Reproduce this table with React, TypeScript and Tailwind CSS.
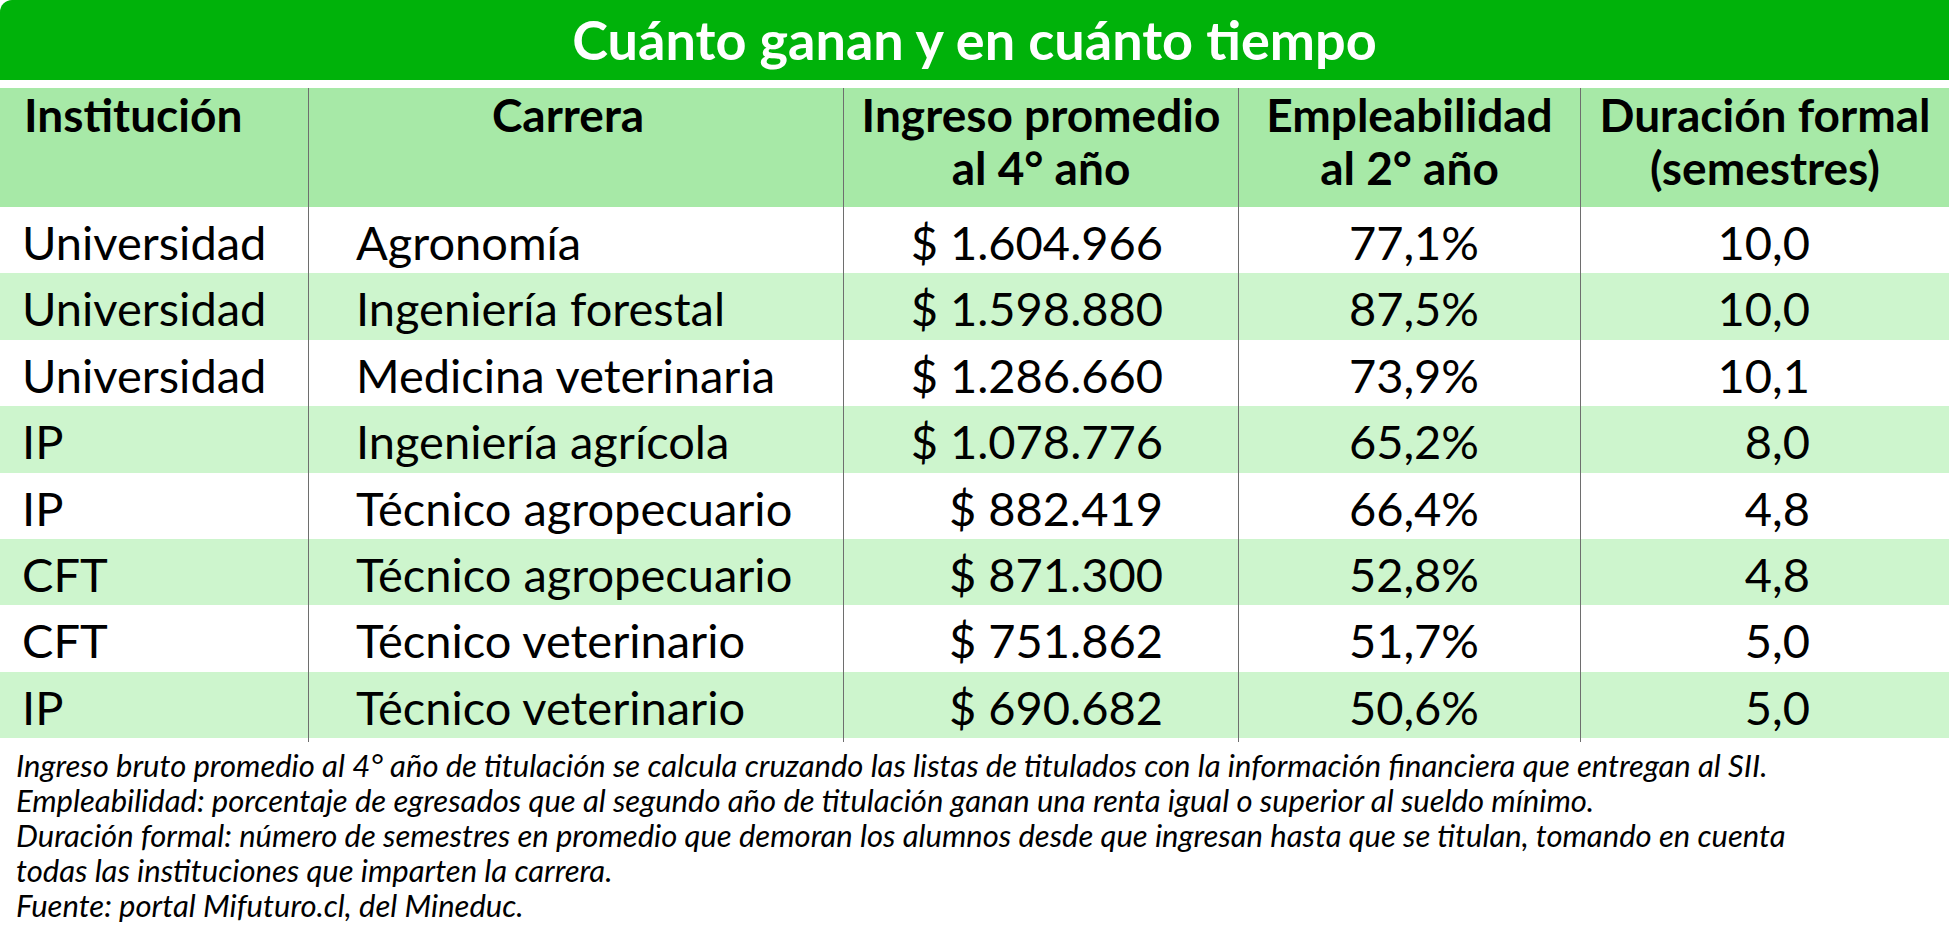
const rows = [
  ['Universidad', 'Agronomía', '$ 1.604.966', '77,1%', '10,0'],
  ['Universidad', 'Ingeniería forestal', '$ 1.598.880', '87,5%', '10,0'],
  ['Universidad', 'Medicina veterinaria', '$ 1.286.660', '73,9%', '10,1'],
  ['IP', 'Ingeniería agrícola', '$ 1.078.776', '65,2%', '8,0'],
  ['IP', 'Técnico agropecuario', '$ 882.419', '66,4%', '4,8'],
  ['CFT', 'Técnico agropecuario', '$ 871.300', '52,8%', '4,8'],
  ['CFT', 'Técnico veterinario', '$ 751.862', '51,7%', '5,0'],
  ['IP', 'Técnico veterinario', '$ 690.682', '50,6%', '5,0'],
];

const cols = 'grid grid-cols-[308px_535px_395px_342px_1fr]';
const divider = 'border-l border-[#6e6e6e]';

export default function App() {
  return (
    <div className="w-[1949px] h-[927px] bg-white text-black [font-family:Lato,sans-serif] overflow-hidden">
      {/* Title bar */}
      <div className="h-[80px] bg-[#00b20a] rounded-tl-[12px] flex items-center justify-center">
        <h1 className="text-white font-bold text-[54px] leading-[80px]">Cuánto ganan y en cuánto tiempo</h1>
      </div>
      <div className="h-[8px]" />

      {/* Header */}
      <div className={`${cols} h-[119px] bg-[#a7e9a7] font-bold text-[46px] leading-[53px]`}>
        <div className="pl-[24px]">Institución</div>
        <div className={`${divider} text-center pr-[16px]`}>Carrera</div>
        <div className={`${divider} text-center`}>
          Ingreso promedio
          <br />
          al 4° año
        </div>
        <div className={`${divider} text-center`}>
          Empleabilidad
          <br />
          al 2° año
        </div>
        <div className={`${divider} text-center`}>
          Duración formal
          <br />
          (semestres)
        </div>
      </div>

      {/* Rows */}
      {rows.map((r, i) => (
        <div
          key={i}
          className={`${cols} h-[66.4px] text-[47px] ${i % 2 === 1 ? 'bg-[#cdf5cd]' : 'bg-white'}`}
        >
          <div className="pl-[22px] flex items-center">{r[0]}</div>
          <div className={`${divider} pl-[47px] flex items-center`}>{r[1]}</div>
          <div className={`${divider} pr-[75px] flex items-center justify-end tabular-nums`}>{r[2]}</div>
          <div className={`${divider} pr-[101px] flex items-center justify-end tabular-nums`}>{r[3]}</div>
          <div className={`${divider} pr-[139px] flex items-center justify-end tabular-nums`}>{r[4]}</div>
        </div>
      ))}

      {/* Notes */}
      <div className="mt-[10px] pl-[16px] italic text-[31px] leading-[35px]">
        <div>Ingreso bruto promedio al 4° año de titulación se calcula cruzando las listas de titulados con la información financiera que entregan al SII.</div>
        <div>Empleabilidad: porcentaje de egresados que al segundo año de titulación ganan una renta igual o superior al sueldo mínimo.</div>
        <div>
          Duración formal: número de semestres en promedio que demoran los alumnos desde que ingresan hasta que se titulan, tomando en cuenta
          <br />
          todas las instituciones que imparten la carrera.
        </div>
        <div>Fuente: portal Mifuturo.cl, del Mineduc.</div>
      </div>
    </div>
  );
}
